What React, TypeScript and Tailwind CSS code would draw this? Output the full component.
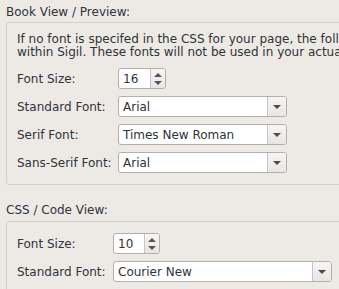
const font = "font-['DejaVu_Sans',sans-serif]"

function SpinBox({ value, width }: { value: string; width: string }) {
  return (
    <div className={`flex h-[21px] ${width} items-stretch rounded-[3px] border border-[#b3afaa] bg-white`}>
      <div className="flex flex-1 items-center pl-[4px] text-[12px] text-[#2e3436]">{value}</div>
      <div className="flex w-[15px] flex-col items-center justify-center gap-[4px] rounded-r-[2px] border-l border-[#c8c4bf] bg-gradient-to-b from-[#f6f5f4] to-[#e8e6e3]">
        <svg width="8" height="4" viewBox="0 0 8 4"><path d="M0 4L4 0L8 4z" fill="#555" /></svg>
        <svg width="8" height="4" viewBox="0 0 8 4"><path d="M0 0L4 4L8 0z" fill="#555" /></svg>
      </div>
    </div>
  )
}

function Combo({ value, width }: { value: string; width: string }) {
  return (
    <div className={`flex h-[21px] ${width} items-stretch rounded-[3px] border border-[#b3afaa] bg-white`}>
      <div className="flex flex-1 items-center pl-[4px] text-[12px] text-[#2e3436]">{value}</div>
      <div className="flex w-[19px] items-center justify-center rounded-r-[2px] border-l border-[#c8c4bf] bg-gradient-to-b from-[#f6f5f4] to-[#e8e6e3]">
        <svg width="8" height="4" viewBox="0 0 8 4"><path d="M0 0L4 4L8 0z" fill="#4a4a4a" /></svg>
      </div>
    </div>
  )
}

function Row({ label, labelW, children }: { label: string; labelW: string; children: React.ReactNode }) {
  return (
    <div className="flex items-center">
      <div className={`${labelW} text-[12px] text-[#2e3436]`}>{label}</div>
      {children}
    </div>
  )
}

export default function App() {
  return (
    <div className={`h-[289px] w-[339px] overflow-hidden bg-[#edeae6] ${font}`}>
      <div className="pl-[6px] pt-[5px] text-[12px] leading-[14px] text-[#2e3436]">Book View / Preview:</div>
      <div className="ml-[6px] mt-[3px] w-[420px] rounded-[3px] border border-[#d3cfca] px-[10px] pb-[11px] pt-[10px]">
        <p className="whitespace-nowrap text-[12px] leading-[13px] text-[#2e3436]">
          If no font is specifed in the CSS for your page, the following fonts will be used
          <br />
          within Sigil. These fonts will not be used in your actual ebook.
        </p>
        <div className="mt-[9px] flex flex-col gap-[7px]">
          <Row label="Font Size:" labelW="w-[101px]">
            <SpinBox value="16" width="w-[48px]" />
          </Row>
          <Row label="Standard Font:" labelW="w-[101px]">
            <Combo value="Arial" width="w-[169px]" />
          </Row>
          <Row label="Serif Font:" labelW="w-[101px]">
            <Combo value="Times New Roman" width="w-[169px]" />
          </Row>
          <Row label="Sans-Serif Font:" labelW="w-[101px]">
            <Combo value="Arial" width="w-[169px]" />
          </Row>
        </div>
      </div>
      <div className="pl-[6px] pt-[18px] text-[12px] leading-[14px] text-[#2e3436]">CSS / Code View:</div>
      <div className="ml-[6px] mt-[4px] w-[420px] rounded-[3px] border border-[#d3cfca] px-[10px] pb-[11px] pt-[11px]">
        <div className="flex flex-col gap-[7px]">
          <Row label="Font Size:" labelW="w-[96px]">
            <SpinBox value="10" width="w-[47px]" />
          </Row>
          <Row label="Standard Font:" labelW="w-[96px]">
            <Combo value="Courier New" width="w-[219px]" />
          </Row>
        </div>
      </div>
    </div>
  )
}
